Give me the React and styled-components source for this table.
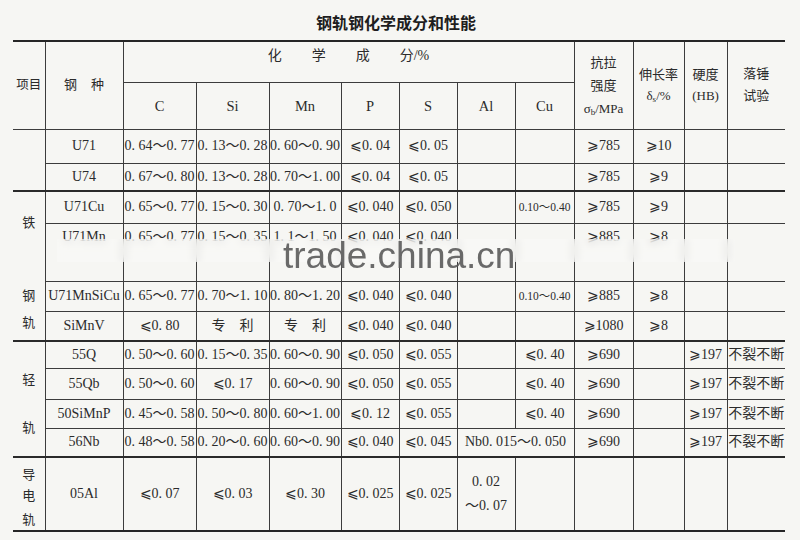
import React from "react";
import styled, { createGlobalStyle } from "styled-components";

const GlobalStyle = createGlobalStyle`
  html, body {
    margin: 0;
    padding: 0;
    background: #f6f6f3;
  }
`;

const Page = styled.div`
  position: relative;
  width: 800px;
  height: 540px;
  overflow: hidden;
  background: #f6f6f3;
  color: #2b2b2b;
  font-family: "Liberation Serif", "DejaVu Serif", "Noto Sans CJK SC", serif;
`;

const Title = styled.h1`
  box-sizing: border-box;
  height: 40px;
  margin: 0;
  padding: 13px 8px 0 0;
  text-align: center;
  font-family: "Noto Sans CJK SC", sans-serif;
  font-size: 16px;
  font-weight: 700;
  line-height: 18px;
  color: #1e1e1e;
`;

const Frame = styled.div`
  margin-left: 13px;
  width: 772px;
  border-top: 2px solid #262626;
  border-bottom: 2px solid #262626;
`;

const Table = styled.table`
  width: 100%;
  border-collapse: collapse;
  border-style: hidden;
  table-layout: fixed;
`;

const Row = styled.tr`
  height: ${(p) => p.$h}px;
  & > td {
    ${(p) => (p.$group ? "border-top: 2px solid #2a2a2a;" : "")}
    ${(p) => (p.$top ? "vertical-align: top; padding-top: 5px;" : "")}
  }
`;

const Cell = styled.td`
  border: 1px solid #3c3c3c;
  padding: ${(p) => p.$pad || "0"};
  text-align: center;
  vertical-align: ${(p) => p.$valign || "middle"};
  white-space: nowrap;
  font-size: ${(p) => p.$size || 14}px;
  line-height: ${(p) => p.$lh || 16}px;
`;

const GroupCell = styled(Cell)`
  && {
    vertical-align: top;
    padding-top: 0;
  }
  font-family: "Noto Sans CJK SC", sans-serif;
  font-size: 13px;
`;

const LabelChar = styled.span`
  display: block;
  line-height: 14px;
  margin-top: ${(p) => p.$gap}px;
`;

const Spaced = styled.span`
  letter-spacing: ${(p) => p.$ls}px;
  margin-right: ${(p) => (p.$trim ? -p.$ls : 0)}px;
`;

const Lines = styled.div`
  font-family: "Liberation Serif", "Noto Sans CJK SC", serif;
  font-size: 13px;
  line-height: ${(p) => p.$lh}px;
`;

const Sub = styled.sub`
  font-size: 9px;
  line-height: 0;
  vertical-align: -2px;
`;

const Small = styled.span`
  font-size: 11.5px;
`;

const Band = styled.div`
  position: absolute;
  left: 57px;
  top: 239px;
  width: 678px;
  height: 23px;
  background: rgba(250, 250, 248, 0.55);
  backdrop-filter: blur(4px);
`;

const Mark = styled.div`
  position: absolute;
  left: 283px;
  top: 237px;
  font-family: "Liberation Sans", Arial, sans-serif;
  font-size: 37px;
  line-height: 37px;
  color: #5a5a5a;
  opacity: 0.9;
  white-space: nowrap;
`;

const widths = [32, 78, 73, 73, 72, 58, 58, 58, 59, 59, 51, 43, 58];

const groups = [
  {
    label: [],
    rows: [
      { h: 34, name: "U71", cells: ["0. 64～0. 77", "0. 13～0. 28", "0. 60～0. 90", "⩽0. 04", "⩽0. 05", "", "", "⩾785", "⩾10", "", ""] },
      { h: 28, name: "U74", cells: ["0. 67～0. 80", "0. 13～0. 28", "0. 70～1. 00", "⩽0. 04", "⩽0. 05", "", "", "⩾785", "⩾9", "", ""] },
    ],
  },
  {
    label: [["铁", 23], ["钢", 59], ["轨", 13]],
    rows: [
      { h: 32, name: "U71Cu", cells: ["0. 65～0. 77", "0. 15～0. 30", "0. 70～1. 0", "⩽0. 040", "⩽0. 050", "", { small: "0.10～0.40" }, "⩾785", "⩾9", "", ""] },
      { h: 58, top: true, name: "U71Mn", cells: ["0. 65～0. 77", "0. 15～0. 35", "1. 1～1. 50", "⩽0. 040", "⩽0. 040", "", "", "⩾885", "⩾8", "", ""] },
      { h: 30, name: "U71MnSiCu", cells: ["0. 65～0. 77", "0. 70～1. 10", "0. 80～1. 20", "⩽0. 040", "⩽0. 040", "", { small: "0.10～0.40" }, "⩾885", "⩾8", "", ""] },
      { h: 30, name: "SiMnV", cells: ["⩽0. 80", { spaced: "专利" }, { spaced: "专利" }, "⩽0. 040", "⩽0. 040", "", "", "⩾1080", "⩾8", "", ""] },
    ],
  },
  {
    label: [["轻", 30], ["轨", 34]],
    rows: [
      { h: 27, name: "55Q", cells: ["0. 50～0. 60", "0. 15～0. 35", "0. 60～0. 90", "⩽0. 050", "⩽0. 055", "", "⩽0. 40", "⩾690", "", "⩾197", "不裂不断"] },
      { h: 31, name: "55Qb", cells: ["0. 50～0. 60", "⩽0. 17", "0. 60～0. 90", "⩽0. 050", "⩽0. 055", "", "⩽0. 40", "⩾690", "", "⩾197", "不裂不断"] },
      { h: 29, name: "50SiMnP", cells: ["0. 45～0. 58", "0. 50～0. 80", "0. 60～1. 00", "⩽0. 12", "⩽0. 055", "", "⩽0. 40", "⩾690", "", "⩾197", "不裂不断"] },
      { h: 29, name: "56Nb", cells: ["0. 48～0. 58", "0. 20～0. 60", "0. 60～0. 90", "⩽0. 040", "⩽0. 045", { span: 2, text: "Nb0. 015～0. 050" }, "⩾690", "", "⩾197", "不裂不断"] },
    ],
  },
  {
    label: [["导", 9], ["电", 7], ["轨", 10]],
    rows: [
      { h: 73, name: "05Al", cells: ["⩽0. 07", "⩽0. 03", "⩽0. 30", "⩽0. 025", "⩽0. 025", { lines: ["0. 02", "～0. 07"] }, "", "", "", "", ""] },
    ],
  },
];

function DataCell({ value }) {
  if (typeof value === "string") return <Cell>{value}</Cell>;
  if (value.small) return <Cell><Small>{value.small}</Small></Cell>;
  if (value.spaced) return <Cell><Spaced $ls={14} $trim>{value.spaced}</Spaced></Cell>;
  if (value.span) return <Cell colSpan={value.span}>{value.text}</Cell>;
  if (value.lines) {
    return (
      <Cell $lh={24}>
        {value.lines[0]}
        <br />
        {value.lines[1]}
      </Cell>
    );
  }
  return <Cell />;
}

function Header() {
  return (
    <>
      <Row $h={40}>
        <Cell rowSpan={2} $size={12.5}>项目</Cell>
        <Cell rowSpan={2} $size={13}>
          <Spaced $ls={14} $trim>钢种</Spaced>
        </Cell>
        <Cell colSpan={7} $valign="top" $pad="6px 0 0 0">
          <Spaced $ls={30}>化学成</Spaced>分/%
        </Cell>
        <Cell rowSpan={2}>
          <Lines $lh={23}>
            抗拉
            <br />
            强度
            <br />
            σ<Sub>b</Sub>/MPa
          </Lines>
        </Cell>
        <Cell rowSpan={2}>
          <Lines $lh={21}>
            伸长率
            <br />
            δ<Sub>s</Sub>/%
          </Lines>
        </Cell>
        <Cell rowSpan={2}>
          <Lines $lh={21}>
            硬度
            <br />
            (HB)
          </Lines>
        </Cell>
        <Cell rowSpan={2}>
          <Lines $lh={22}>
            落锤
            <br />
            试验
          </Lines>
        </Cell>
      </Row>
      <Row $h={47}>
        {["C", "Si", "Mn", "P", "S", "Al", "Cu"].map((el) => (
          <Cell key={el} $size={14.5}>{el}</Cell>
        ))}
      </Row>
    </>
  );
}

export default function App() {
  return (
    <Page>
      <GlobalStyle />
      <Title>钢轨钢化学成分和性能</Title>
      <Frame>
        <Table>
          <colgroup>
            {widths.map((w, i) => (
              <col key={i} style={{ width: w }} />
            ))}
          </colgroup>
          <tbody>
            <Header />
            {groups.map((g, gi) =>
              g.rows.map((r, ri) => (
                <Row key={r.name} $h={r.h} $group={ri === 0 && gi > 0} $top={r.top}>
                  {ri === 0 && (
                    <GroupCell rowSpan={g.rows.length}>
                      {g.label.map(([ch, gap], i) => (
                        <LabelChar key={i} $gap={gap}>{ch}</LabelChar>
                      ))}
                    </GroupCell>
                  )}
                  <Cell>{r.name}</Cell>
                  {r.cells.map((c, ci) => (
                    <DataCell key={ci} value={c} />
                  ))}
                </Row>
              ))
            )}
          </tbody>
        </Table>
      </Frame>
      <Band />
      <Mark>trade.china.cn</Mark>
    </Page>
  );
}
